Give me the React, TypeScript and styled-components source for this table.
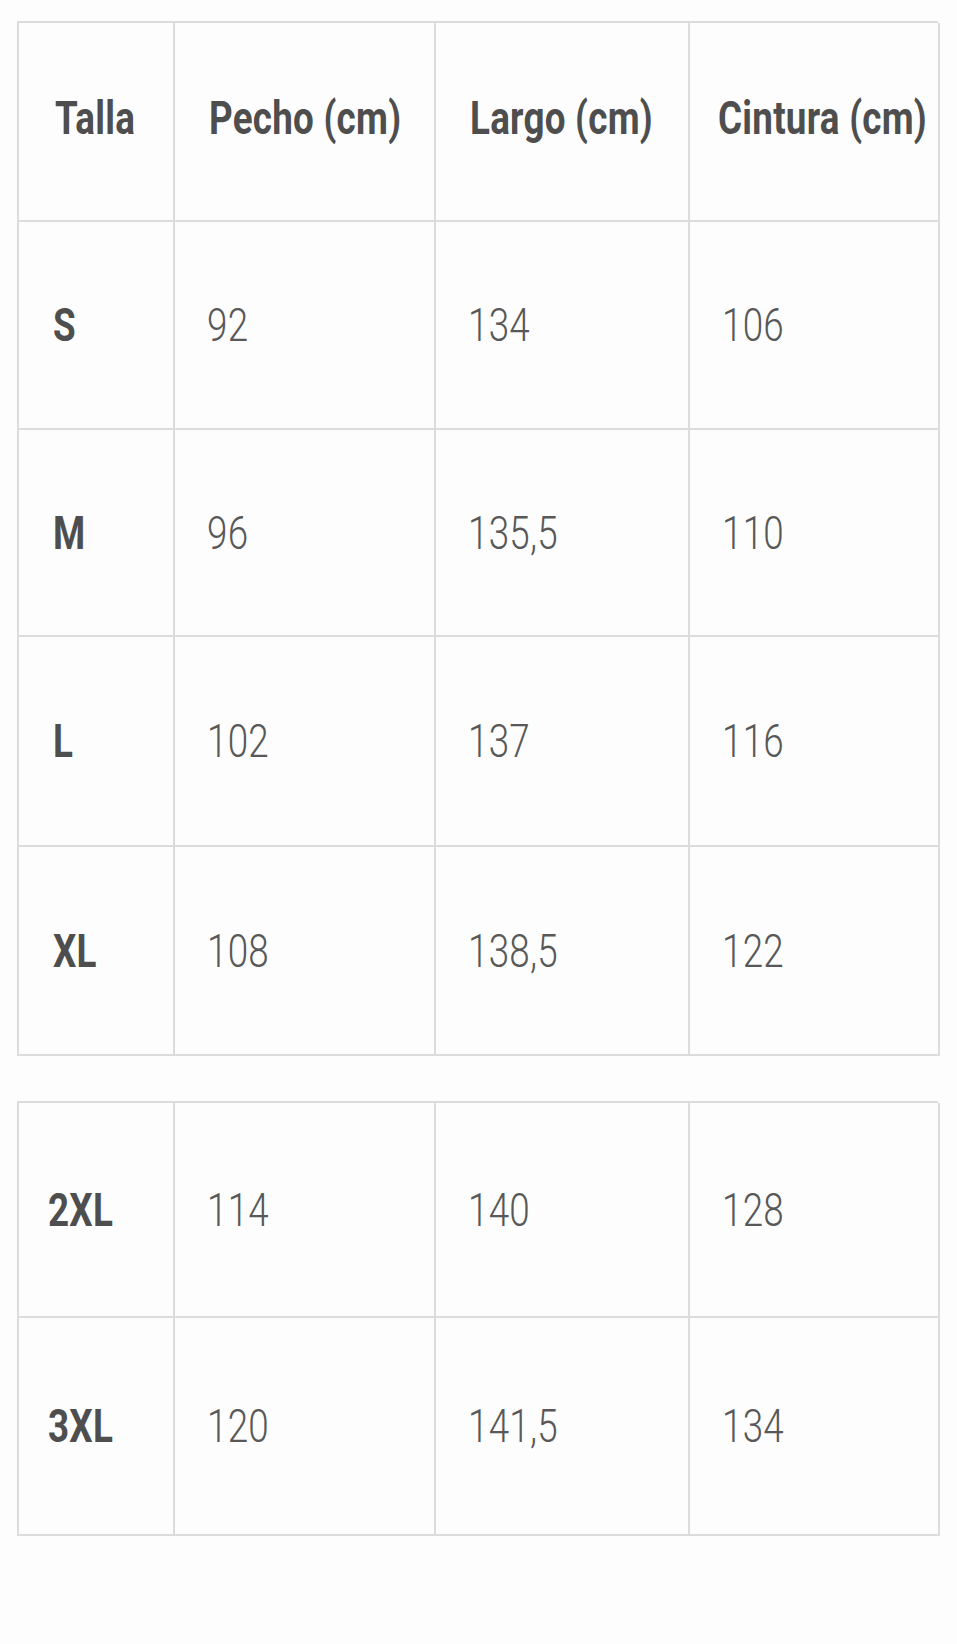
import React from 'react';
import styled, { createGlobalStyle } from 'styled-components';

const GlobalStyle = createGlobalStyle`
  html, body {
    margin: 0;
    padding: 0;
    background: #fdfdfd;
  }
  body {
    font-family: Roboto, 'Liberation Sans', sans-serif;
  }
`;

const Page = styled.div`
  width: 957px;
  min-height: 1644px;
  padding: 21px 0 0 17px;
  box-sizing: border-box;
  display: flex;
  flex-direction: column;
  gap: 45px;
`;

const Table = styled.div`
  width: 921px;
  display: grid;
  grid-template-columns: 156px 261px 254px 250px;
  border-top: 2px solid #dcdcdc;
  border-left: 2px solid #dcdcdc;
  box-sizing: border-box;
`;

const Cell = styled.div<{ $h: number; $header?: boolean }>`
  height: ${({ $h }) => $h}px;
  border-right: 2px solid #dcdcdc;
  border-bottom: 2px solid #dcdcdc;
  box-sizing: border-box;
  display: flex;
  align-items: center;
  padding-left: 34px;
  padding-bottom: ${({ $header }) => ($header ? 8 : 0)}px;
  white-space: nowrap;
`;

const Text = styled.span<{ $bold?: boolean; $shift: number }>`
  display: inline-block;
  font-size: 46px;
  font-weight: ${({ $bold }) => ($bold ? 700 : 300)};
  color: ${({ $bold }) => ($bold ? '#4e4e4e' : '#585858')};
  transform: translateX(${({ $shift }) => $shift}px) scaleX(0.8);
  transform-origin: left center;
  letter-spacing: 0.3px;
`;

type Row = { h: number; cells: string[]; header?: boolean };

const first: Row[] = [
  { h: 199, cells: ['Talla', 'Pecho (cm)', 'Largo (cm)', 'Cintura (cm)'], header: true },
  { h: 208, cells: ['S', '92', '134', '106'] },
  { h: 207, cells: ['M', '96', '135,5', '110'] },
  { h: 210, cells: ['L', '102', '137', '116'] },
  { h: 209, cells: ['XL', '108', '138,5', '122'] },
];

const second: Row[] = [
  { h: 215, cells: ['2XL', '114', '140', '128'] },
  { h: 218, cells: ['3XL', '120', '141,5', '134'] },
];

// the source isn't perfectly aligned: wide labels sit a bit further left
const shiftFor = (row: Row, col: number, text: string) => {
  if (row.header) return col === 0 ? 2 : col === 3 ? -6 : 0;
  if (col === 0) return text.length > 2 ? -5 : 0;
  return -2;
};

const SizeTable = ({ rows }: { rows: Row[] }) => (
  <Table>
    {rows.map((row) =>
      row.cells.map((text, col) => (
        <Cell key={row.cells[0] + col} $h={row.h} $header={row.header}>
          <Text $bold={row.header || col === 0} $shift={shiftFor(row, col, text)}>
            {text}
          </Text>
        </Cell>
      )),
    )}
  </Table>
);

export default function App() {
  return (
    <>
      <GlobalStyle />
      <Page>
        <SizeTable rows={first} />
        <SizeTable rows={second} />
      </Page>
    </>
  );
}
